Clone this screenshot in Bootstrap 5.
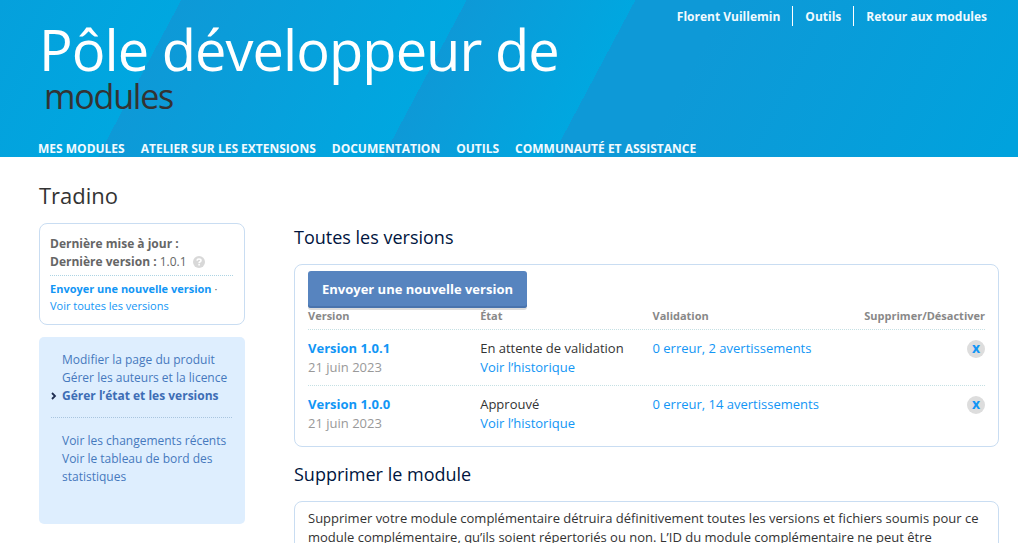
<!DOCTYPE html>
<html lang="fr">
<head>
<meta charset="utf-8">
<meta name="viewport" content="width=device-width, initial-scale=1">
<title>Pôle développeur de modules</title>
<link href="https://cdn.jsdelivr.net/npm/bootstrap@5.3.0/dist/css/bootstrap.min.css" rel="stylesheet">
<style>
body{font-family:"Open Sans",sans-serif;font-size:13px;line-height:19px;color:#333;background:#fff}
a{color:#1296f5;text-decoration:none}
.site-head{height:157px;padding-left:38px;background:linear-gradient(118deg,#05a0dc 0,#00a7e0 160px,#0e99d7 160px,#00a7e0 412px,#0e99d7 412px,#00a7e0 561px,#0e99d7 561px,#0e99d7 640px,#00a2dd 960px)}
.account{height:20px;margin:6px 19px 0 0;font-size:12px;font-weight:700;line-height:21px}
.account a{color:#f2fafe;padding:0 12px}
.account a+a{border-left:1px solid #fff}
.site-title{color:#fff;font-size:56px;line-height:56px;margin:-5px 0 0 1px;font-weight:400;letter-spacing:-.95px}
.site-title small{display:block;font-size:34px;line-height:34px;color:#333;margin:2px 0 0 5px;font-weight:400;letter-spacing:-1.2px}
.main-nav{gap:16px;font-size:12px;font-weight:700;line-height:16px}
.main-nav a{color:#f2fafe}
.page-body{height:386px;overflow:hidden;padding:25px 19px 0 39px}
.module-name{font-size:22px;line-height:26px;font-weight:400;margin:0 0 15px;color:#333}
.columns{gap:49px}
.side{width:206px;flex:none}
.panel{border:1px solid #c9ddf2;border-radius:8px}
.info{height:102px;padding:11px 11px 0 10px;font-size:12px;line-height:18px;color:#666;margin-bottom:12px}
.info .links{font-size:11px;line-height:17px;border-top:1px dotted #add4e4;margin-top:4px;padding-top:4px}
.help{margin-left:6px}
.side-menu{height:187px;background:#deeefe;border-radius:5px;padding:14px 13px 0 12px;font-size:12px;line-height:18px}
.side-menu a{display:block;color:#4679bd;padding-left:11px}
.side-menu a.current{font-weight:700;color:#3d6db5;position:relative}
.side-menu svg{position:absolute;left:0;top:5px}
.side-menu hr{border:0;border-top:1px dotted #a9c5df;opacity:1;margin:12px 0 14px}
.content{padding-top:2px}
h2{font-size:18px;line-height:24px;font-weight:400;color:#00153e;margin:0}
.versions{height:183px;padding:6px 13px 0;margin:15px 0}
.send{height:37px;line-height:37px;width:219px;background:#5784bf;color:#fff;font-weight:700;border-radius:3px;box-shadow:inset 0 -2px #4a74ad,0 2px 0 #dcdcdc;padding:0;font-size:13px;border:0}
.send:hover{background:#5784bf;color:#fff}
.grid-row{display:grid;grid-template-columns:172.2px 172.3px 1fr 122px;border-bottom:1px dotted #c5e0e4}
.grid-row:last-child{border:0}
.heads{font-size:11px;font-weight:700;color:#888;line-height:16px;padding-bottom:5px}
.entry{height:56px;padding-top:9px}
.when{color:#999}
.remove{width:18px;height:18px;border-radius:50%;background:#ddd;font-weight:700;line-height:16px;font-size:14px;margin-top:1px}
.delete-box{margin-top:15px;padding:7px 13px;height:90px}
</style>
</head>
<body>
<header class="site-head d-flex flex-column">
  <nav class="account d-flex align-self-end"><a href="#">Florent Vuillemin</a><a href="#">Outils</a><a href="#">Retour aux modules</a></nav>
  <h1 class="site-title">Pôle développeur de <small>modules</small></h1>
  <nav class="main-nav d-flex mt-auto"><a href="#">MES MODULES</a><a href="#">ATELIER SUR LES EXTENSIONS</a><a href="#">DOCUMENTATION</a><a href="#">OUTILS</a><a href="#">COMMUNAUTÉ ET ASSISTANCE</a></nav>
</header>
<main class="page-body">
  <p class="module-name">Tradino</p>
  <div class="columns d-flex">
    <aside class="side">
      <div class="panel info">
        <div><b>Dernière mise à jour :</b></div>
        <div class="d-flex align-items-center"><b>Dernière version :</b>&nbsp;1.0.1
          <svg class="help" width="12" height="12" viewBox="0 0 12 12"><circle cx="6" cy="6" r="6" fill="#d8d8d8"/><path d="M4 4.6Q4.1 3 6 3Q8 3 8 4.5Q8 5.4 6.8 6Q6.1 6.4 6.1 7.2" fill="none" stroke="#fff" stroke-width="1.6"/><rect x="5.3" y="8" width="1.6" height="1.5" fill="#fff"/></svg>
        </div>
        <div class="links"><a href="#"><b>Envoyer une nouvelle version</b></a> · <br><a href="#">Voir toutes les versions</a></div>
      </div>
      <nav class="side-menu">
        <a href="#">Modifier la page du produit</a>
        <a href="#">Gérer les auteurs et la licence</a>
        <a href="#" class="current"><svg width="7" height="8" viewBox="0 0 7 8"><path d="M1 1L4 4L1 7" fill="none" stroke="#1f2d50" stroke-width="1.8"/></svg>Gérer l’état et les versions</a>
        <hr>
        <a href="#">Voir les changements récents</a>
        <a href="#">Voir le tableau de bord des statistiques</a>
      </nav>
    </aside>
    <section class="content flex-grow-1">
      <h2>Toutes les versions</h2>
      <div class="panel versions">
        <a href="#" class="btn send d-block">Envoyer une nouvelle version</a>
        <div class="grid-row heads"><span>Version</span><span>État</span><span>Validation</span><span class="text-end">Supprimer/Désactiver</span></div>
        <div class="grid-row entry">
          <div><a href="#"><b>Version 1.0.1</b></a><div class="when">21 juin 2023</div></div>
          <div>En attente de validation<br><a href="#">Voir l’historique</a></div>
          <div><a href="#">0 erreur, 2 avertissements</a></div>
          <a href="#" class="remove text-center ms-auto">x</a>
        </div>
        <div class="grid-row entry">
          <div><a href="#"><b>Version 1.0.0</b></a><div class="when">21 juin 2023</div></div>
          <div>Approuvé<br><a href="#">Voir l’historique</a></div>
          <div><a href="#">0 erreur, 14 avertissements</a></div>
          <a href="#" class="remove text-center ms-auto">x</a>
        </div>
      </div>
      <h2>Supprimer le module</h2>
      <div class="panel delete-box">Supprimer votre module complémentaire détruira définitivement toutes les versions et fichiers soumis pour ce module complémentaire, qu’ils soient répertoriés ou non. L’ID du module complémentaire ne peut être</div>
    </section>
  </div>
</main>
<script src="https://cdn.jsdelivr.net/npm/bootstrap@5.3.0/dist/js/bootstrap.bundle.min.js"></script>
</body>
</html>
